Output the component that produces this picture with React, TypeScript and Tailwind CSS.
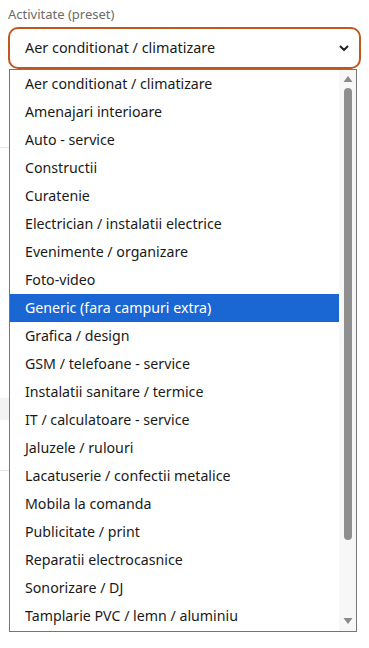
import React from "react";

const options = [
  "Aer conditionat / climatizare",
  "Amenajari interioare",
  "Auto - service",
  "Constructii",
  "Curatenie",
  "Electrician / instalatii electrice",
  "Evenimente / organizare",
  "Foto-video",
  "Generic (fara campuri extra)",
  "Grafica / design",
  "GSM / telefoane - service",
  "Instalatii sanitare / termice",
  "IT / calculatoare - service",
  "Jaluzele / rulouri",
  "Lacatuserie / confectii metalice",
  "Mobila la comanda",
  "Publicitate / print",
  "Reparatii electrocasnice",
  "Sonorizare / DJ",
  "Tamplarie PVC / lemn / aluminiu",
];

const selected = "Generic (fara campuri extra)";

export default function App() {
  return (
    <div
      className="relative w-[369px] h-[648px] bg-white overflow-hidden"
      style={{ fontFamily: '"Noto Sans", "Open Sans", sans-serif' }}
    >
      {/* Form behind the dropdown */}
      <div className="px-2 pt-[5px]">
        <label className="block text-[13px] leading-[18px] text-[#6b6b6b]">Activitate (preset)</label>
        <div className="mt-[4px] h-[42px] rounded-[10px] border-2 border-[#c0581e] flex items-center justify-between pl-[15px] pr-[9px]">
          <span className="text-[14.4px] text-[#1a1a1a]">Aer conditionat / climatizare</span>
          <svg width="12" height="12" viewBox="0 0 12 12" fill="none">
            <path d="M2.5 4.5 6 8l3.5-3.5" stroke="#222" strokeWidth="2" strokeLinecap="round" strokeLinejoin="round" />
          </svg>
        </div>
      </div>
      <div className="w-[340px]">
        <div className="mt-[78px] border-t border-[#e5e5e5]" />
        <div className="mt-[250px] h-[22px] bg-[#f3f3f3]" />
        <div className="mt-[50px] border-t border-[#e5e5e5]" />
      </div>

      {/* Open native-style list */}
      <div className="absolute left-[9px] top-[69px] w-[348px] h-[563px] border border-[#767676] bg-white flex">
        <ul className="flex-1 py-0">
          {options.map((o) => (
            <li
              key={o}
              className={`h-[28px] flex items-center pl-[15px] text-[14.2px] ${
                o === selected ? "bg-[#1a66d2] text-white" : "text-[#1a1a1a]"
              }`}
            >
              {o}
            </li>
          ))}
        </ul>
        <div className="w-[17px] bg-[#f7f7f7] flex flex-col items-center">
          <svg width="10" height="8" viewBox="0 0 10 8" className="mt-[5px]">
            <path d="M5 1 9.5 7h-9z" fill="#8a8a8a" />
          </svg>
          <div className="mt-[5px] w-[8px] h-[452px] rounded-full bg-[#8f8f8f]" />
          <div className="flex-1" />
          <svg width="10" height="8" viewBox="0 0 10 8" className="mb-[6px]">
            <path d="M5 7 9.5 1h-9z" fill="#8a8a8a" />
          </svg>
        </div>
      </div>
    </div>
  );
}
